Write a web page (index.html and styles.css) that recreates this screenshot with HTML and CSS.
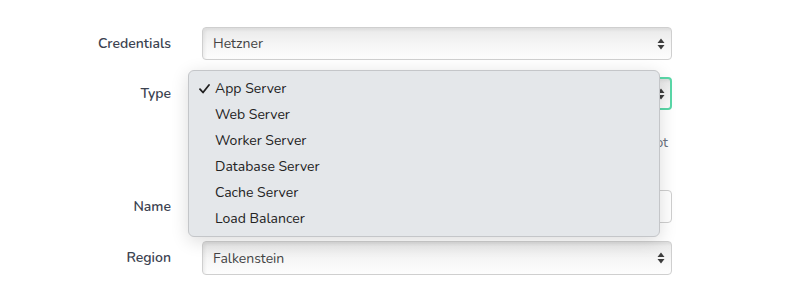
FILE: index.html
```html
<!DOCTYPE html>
<html lang="en">
<head>
  <meta charset="UTF-8">
  <title>Create server</title>
  <link rel="stylesheet" href="styles.css">
</head>
<body>
  <form class="server-form">
    <div class="form-row">
      <label class="form-label" for="credentials">Credentials</label>
      <div class="form-field">
        <div class="select-wrap">
          <select id="credentials" class="form-select">
            <option>Hetzner</option>
          </select>
          <svg class="select-arrows" width="8" height="12" viewBox="0 0 8 12"><path d="M4 0.5 L7.5 5 L0.5 5 Z M4 11.5 L7.5 7 L0.5 7 Z" fill="#3d3d3d"/></svg>
        </div>
      </div>
    </div>

    <div class="form-row">
      <label class="form-label" for="type">Type</label>
      <div class="form-field">
        <div class="select-wrap">
          <select id="type" class="form-select is-focused">
            <option>App Server</option>
          </select>
          <svg class="select-arrows" width="8" height="12" viewBox="0 0 8 12"><path d="M4 0.5 L7.5 5 L0.5 5 Z M4 11.5 L7.5 7 L0.5 7 Z" fill="#3d3d3d"/></svg>
        </div>
        <p class="help-text">Every server type installs its own software stack during the first boot (changing it later is not supported).</p>
      </div>
    </div>

    <div class="form-row">
      <label class="form-label" for="name">Name</label>
      <div class="form-field">
        <input id="name" class="form-input" type="text">
      </div>
    </div>

    <div class="form-row">
      <label class="form-label" for="region">Region</label>
      <div class="form-field">
        <div class="select-wrap">
          <select id="region" class="form-select">
            <option>Falkenstein</option>
          </select>
          <svg class="select-arrows" width="8" height="12" viewBox="0 0 8 12"><path d="M4 0.5 L7.5 5 L0.5 5 Z M4 11.5 L7.5 7 L0.5 7 Z" fill="#3d3d3d"/></svg>
        </div>
      </div>
    </div>
  </form>

  <ul class="dropdown-menu">
    <li class="dropdown-item is-selected">
      <svg class="check" width="11" height="10" viewBox="0 0 11 10"><path d="M1 5.2 L4 8.5 L10 1" fill="none" stroke="#1f1f1f" stroke-width="1.8" stroke-linecap="round" stroke-linejoin="round"/></svg>
      App Server
    </li>
    <li class="dropdown-item">Web Server</li>
    <li class="dropdown-item">Worker Server</li>
    <li class="dropdown-item">Database Server</li>
    <li class="dropdown-item">Cache Server</li>
    <li class="dropdown-item">Load Balancer</li>
  </ul>
</body>
</html>
```

FILE: styles.css
```css
body {
  margin: 0;
  font-family: "Nunito", "Lato", "Noto Sans", sans-serif;
  font-size: 14px;
  color: #374151;
  background: #fff;
}
.server-form {
  padding-top: 27px;
}
.form-row {
  display: grid;
  grid-template-columns: 171px 470px;
  column-gap: 31px;
  align-items: start;
  margin-bottom: 17px;
}
.form-row:nth-child(3) {
  margin-bottom: 18px;
}
.form-row:last-child {
  margin-bottom: 0;
}
.form-label {
  line-height: 33px;
  text-align: right;
  font-weight: 600;
  color: #3b4250;
}
.select-wrap {
  position: relative;
}
.form-select {
  display: block;
  width: 100%;
  height: 33px;
  margin: 0;
  padding: 0 28px 0 10px;
  -webkit-appearance: none;
  appearance: none;
  font: inherit;
  font-size: 14px;
  color: #444;
  border: 1px solid #cfcfcf;
  border-radius: 4px;
  background: linear-gradient(#e9e9e9, #f6f6f6 55%, #fdfdfd);
  box-shadow: inset 2px 2px 3px rgba(0, 0, 0, 0.06);
}
.form-select.is-focused {
  border: 2px solid #5ad8a8;
}
.select-arrows {
  position: absolute;
  right: 7px;
  top: 11px;
}
.help-text {
  margin: 23px 0 0;
  padding-right: 4px;
  line-height: 20px;
  text-align: justify;
  color: #6b7280;
}
.form-input {
  display: block;
  box-sizing: border-box;
  width: 100%;
  height: 33px;
  margin: 0;
  border: 1px solid #cfcfcf;
  border-radius: 4px;
  background: #fff;
}
.form-row:last-child .form-select {
  height: 34px;
}
.dropdown-menu {
  position: absolute;
  left: 188px;
  top: 70px;
  width: 472px;
  height: 167px;
  box-sizing: border-box;
  margin: 0;
  padding: 5px 0 6px;
  list-style: none;
  background: #e4e7ea;
  border: 1px solid #c4c6c9;
  border-radius: 6px;
  box-shadow: 0 4px 18px rgba(0, 0, 0, 0.14);
}
.dropdown-item {
  position: relative;
  height: 26px;
  line-height: 26px;
  padding-left: 26px;
  color: #222;
}
.check {
  position: absolute;
  left: 10px;
  top: 8px;
}
```
